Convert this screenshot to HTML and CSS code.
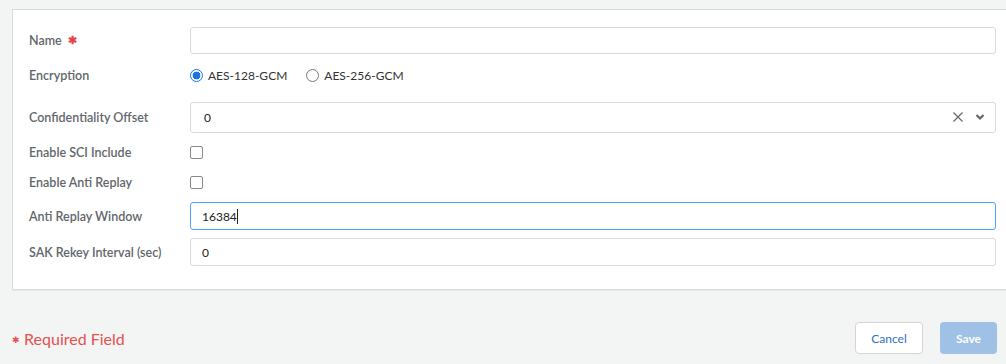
FILE: index.html
```html
<!DOCTYPE html>
<html lang="en">
<head>
    <meta charset="UTF-8">
    <title>MACsec Profile</title>
    <link rel="stylesheet" href="styles.css">
</head>
<body>
    <div class="card">
        <div class="row row-name">
            <label class="label">Name <span class="req">&#10033;</span></label>
            <div class="field"><div class="input"></div></div>
        </div>

        <div class="row row-tall">
            <label class="label">Encryption</label>
            <div class="field radios">
                <span class="radio checked"></span><span class="radio-text">AES-128-GCM</span>
                <span class="radio"></span><span class="radio-text">AES-256-GCM</span>
            </div>
        </div>

        <div class="row row-tall">
            <label class="label">Confidentiality Offset</label>
            <div class="field">
                <div class="input select">
                    <span class="value">0</span>
                    <span class="icons">
                        <svg width="12" height="12" viewBox="0 0 12 12"><path d="M1.5 1.5 L10.5 10.5 M10.5 1.5 L1.5 10.5" stroke="#666" stroke-width="1.2" fill="none"/></svg>
                        <svg width="10" height="8" viewBox="0 0 10 8"><path d="M1.5 2 L5 5.5 L8.5 2" stroke="#666" stroke-width="2.2" fill="none"/></svg>
                    </span>
                </div>
            </div>
        </div>

        <div class="row row-check">
            <label class="label">Enable SCI Include</label>
            <div class="field"><span class="checkbox"></span></div>
        </div>

        <div class="row row-check2">
            <label class="label">Enable Anti Replay</label>
            <div class="field"><span class="checkbox"></span></div>
        </div>

        <div class="row row-input">
            <label class="label">Anti Replay Window</label>
            <div class="field"><div class="input focus"><span class="value">16384</span><span class="caret"></span></div></div>
        </div>

        <div class="row row-input">
            <label class="label">SAK Rekey Interval (sec)</label>
            <div class="field"><div class="input"><span class="value">0</span></div></div>
        </div>
    </div>

    <div class="footer">
        <div class="required"><span class="star">&#10033;</span> Required Field</div>
        <div class="buttons">
            <button class="btn btn-cancel">Cancel</button>
            <button class="btn btn-save">Save</button>
        </div>
    </div>
</body>
</html>
```

FILE: styles.css
```css
body {
    margin: 0;
    background: #f3f4f4;
    font-family: 'Lato', 'Liberation Sans', sans-serif;
    color: #333;
    width: 1006px;
    height: 364px;
    overflow: hidden;
}

.card {
    background: #fff;
    border: 1px solid #d6d9dd;
    border-right: none;
    margin: 9px 0 0 12px;
    padding: 16px 10px 19px 16px;
    box-shadow: 0 1px 1px rgba(0, 0, 0, 0.04);
}

.row {
    display: flex;
    align-items: center;
}

.row-name { height: 28px; }
.row-tall { height: 42px; }
.row-check { height: 28px; }
.row-check2 { height: 32px; }
.row-input { height: 36px; }

.label {
    width: 161px;
    flex: none;
    font-size: 12.5px;
    font-weight: 600;
    color: #62666b;
}

.req {
    color: #e0474c;
    font-size: 11px;
    margin-left: 3px;
    vertical-align: 1px;
}

.field {
    flex: 1;
}

.input {
    box-sizing: border-box;
    height: 28px;
    border: 1px solid #d9d9d9;
    border-radius: 3px;
    display: flex;
    align-items: center;
    padding: 0 11px;
    font-size: 12px;
    color: #222;
}

.row-name .input {
    height: 27px;
}

.select {
    height: 31px;
    padding-right: 10px;
    justify-content: space-between;
}

.select .value {
    margin-left: 2px;
}

.icons {
    display: flex;
    align-items: center;
    gap: 11px;
}

.focus {
    border-color: #4da3f7;
}

.caret {
    width: 1px;
    height: 15px;
    background: #222;
}

.radios {
    display: flex;
    align-items: center;
    font-size: 12px;
    color: #333;
}

.radio {
    box-sizing: border-box;
    width: 13px;
    height: 13px;
    border: 1px solid #777;
    border-radius: 50%;
    margin-right: 5px;
    background: #fff;
}

.radio.checked {
    border: 1.5px solid #1a73e8;
    background: radial-gradient(circle, #1a73e8 0 3.6px, #fff 4.2px);
}

.radio-text {
    margin-right: 19px;
}

.checkbox {
    display: block;
    box-sizing: border-box;
    width: 13px;
    height: 13px;
    border: 1px solid #8a8a8a;
    border-radius: 2px;
    background: #fff;
}

.footer {
    display: flex;
    justify-content: space-between;
    align-items: center;
    margin-top: 32px;
    padding: 0 9px 0 12px;
}

.required {
    color: #e4514f;
    font-size: 16px;
}

.required .star {
    font-size: 9px;
    vertical-align: 2px;
}

.buttons {
    display: flex;
    gap: 17px;
}

.btn {
    height: 32px;
    border-radius: 4px;
    font-family: 'Lato', 'Liberation Sans', sans-serif;
    font-size: 12px;
    padding: 0;
}

.btn-cancel {
    width: 68px;
    background: #fff;
    border: 1px solid #d5d5d5;
    color: #2f6fc8;
}

.btn-save {
    width: 57px;
    background: #9fc1e6;
    border: none;
    color: #fff;
    font-weight: 700;
}
```
